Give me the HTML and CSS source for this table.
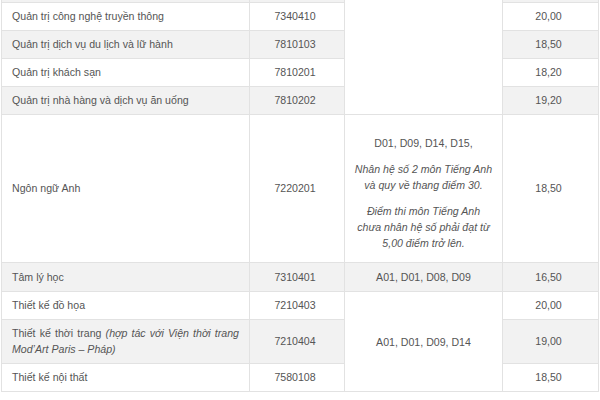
FILE: index.html
```html
<!DOCTYPE html>
<html lang="vi">
<head>
<meta charset="utf-8">
<link rel="stylesheet" href="styles.css">
</head>
<body>
<div class="wrap">
<table class="scores">
  <colgroup>
    <col class="c-name">
    <col class="c-code">
    <col class="c-comb">
    <col class="c-score">
  </colgroup>
  <tbody>
    <tr class="alt spacer">
      <td></td><td></td><td class="comb blank" rowspan="5"></td><td></td>
    </tr>
    <tr>
      <td class="name">Quản trị công nghệ truyền thông</td>
      <td class="num">7340410</td>
      <td class="num">20,00</td>
    </tr>
    <tr class="alt">
      <td class="name">Quản trị dịch vụ du lịch và lữ hành</td>
      <td class="num">7810103</td>
      <td class="num">18,50</td>
    </tr>
    <tr>
      <td class="name">Quản trị khách sạn</td>
      <td class="num">7810201</td>
      <td class="num">18,20</td>
    </tr>
    <tr class="alt">
      <td class="name">Quản trị nhà hàng và dịch vụ ăn uống</td>
      <td class="num">7810202</td>
      <td class="num">19,20</td>
    </tr>
    <tr>
      <td class="name">Ngôn ngữ Anh</td>
      <td class="num">7220201</td>
      <td class="comb tall">
        <p>D01, D09, D14, D15,</p>
        <p class="note">Nhân hệ số 2 môn Tiếng Anh<br>và quy về thang điểm 30.</p>
        <p class="note">Điểm thi môn Tiếng Anh<br>chưa nhân hệ số phải đạt từ<br>5,00 điểm trở lên.</p>
      </td>
      <td class="num">18,50</td>
    </tr>
    <tr class="alt">
      <td class="name">Tâm lý học</td>
      <td class="num">7310401</td>
      <td class="comb">A01, D01, D08, D09</td>
      <td class="num">16,50</td>
    </tr>
    <tr>
      <td class="name">Thiết kế đồ họa</td>
      <td class="num">7210403</td>
      <td class="comb blank" rowspan="3">A01, D01, D09, D14</td>
      <td class="num">20,00</td>
    </tr>
    <tr class="alt">
      <td class="name">Thiết kế thời trang <em>(hợp tác với Viện thời trang Mod’Art Paris – Pháp)</em></td>
      <td class="num">7210404</td>
      <td class="num">19,00</td>
    </tr>
    <tr>
      <td class="name">Thiết kế nội thất</td>
      <td class="num">7580108</td>
      <td class="num">18,50</td>
    </tr>
  </tbody>
</table>
</div>
</body>
</html>
```

FILE: styles.css
```css
html, body {
  margin: 0;
  padding: 0;
  background: #ffffff;
}

.wrap {
  padding: 0 2px 0 1px;
  width: 600px;
  box-sizing: border-box;
}

.scores {
  width: 597px;
  border-collapse: collapse;
  table-layout: fixed;
  font-family: "Liberation Sans", Arial, sans-serif;
  font-size: 10.6px;
  line-height: 16px;
  color: #555555;
}

.c-name { width: 248px; }
.c-code { width: 95px; }
.c-comb { width: 158px; }
.c-score { width: 96px; }

.scores td {
  border: 1px solid #e2e2e2;
  padding: 5px 10px 6px 10px;
  vertical-align: middle;
  background: #ffffff;
}

.scores tr.alt td {
  background: #f2f2f2;
}

.scores tr.spacer td {
  border-top: none;
  padding: 0;
  height: 2px;
  line-height: 0;
  font-size: 0;
}

.scores td.name {
  text-align: justify;
}

.scores td.num {
  text-align: center;
  padding-left: 4px;
  padding-right: 8px;
}

.scores td.comb {
  text-align: center;
  padding: 6px 4px;
}

.scores td.comb.tall {
  padding: 10px 4px 11px;
}

.scores tr td.blank {
  background: #ffffff;
}

.comb p {
  margin: 10px 0;
}

.comb p:last-child {
  margin-bottom: 0;
}

.comb .note {
  font-style: italic;
}
```
